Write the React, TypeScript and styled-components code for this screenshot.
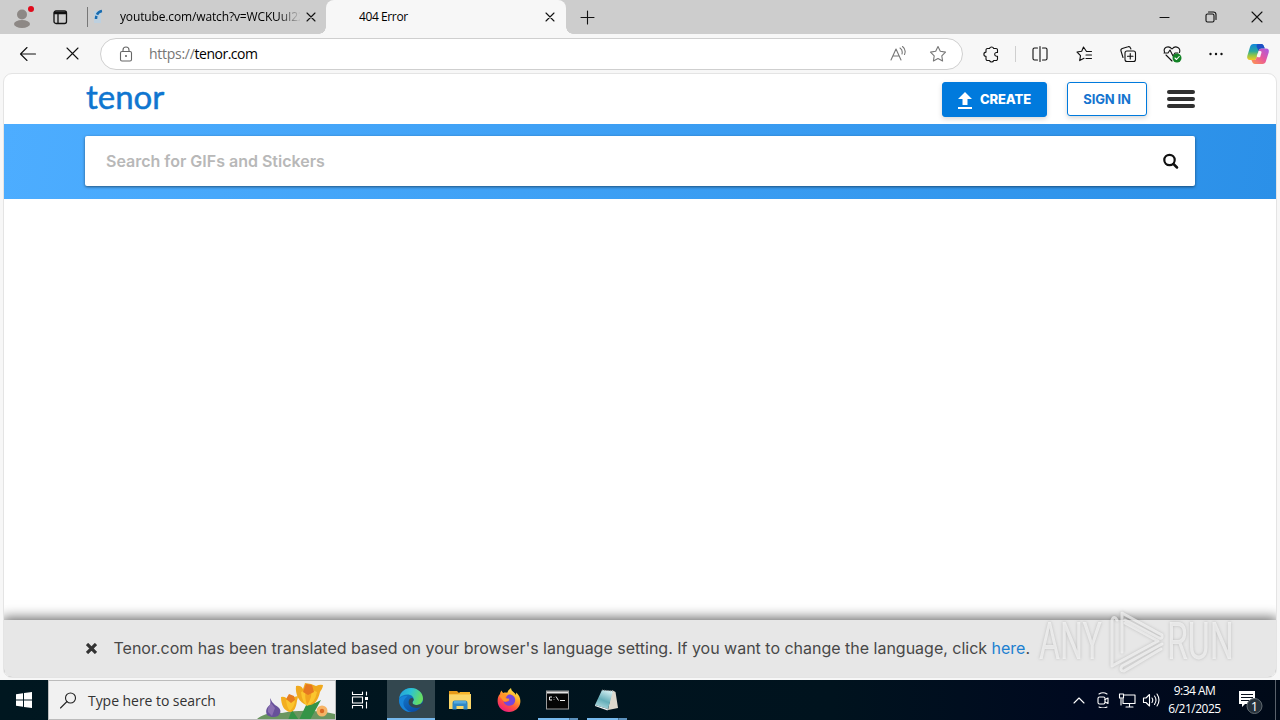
import * as React from 'react';
import styled, { createGlobalStyle } from 'styled-components';

const uiFont = `'Open Sans', 'Noto Sans', sans-serif`;
const siteFont = `Inter, 'Liberation Sans', sans-serif`;

const GlobalStyle = createGlobalStyle`
  * {
    box-sizing: border-box;
  }
  body {
    margin: 0;
    overflow: hidden;
    font-family: ${uiFont};
  }
  svg {
    display: block;
    flex-shrink: 0;
  }
`;

const Desktop = styled.div`
  position: relative;
  display: flex;
  flex-direction: column;
  width: 1280px;
  height: 720px;
  overflow: hidden;
  background: #f7f7f7;
`;

/* ---------- tab strip ---------- */

const TabStrip = styled.div`
  display: flex;
  height: 34px;
  background: #cdcdcd;
  color: #000;
  font-size: 12px;
`;

const Cell = styled.div<{ $width: number }>`
  display: flex;
  flex: none;
  align-items: center;
  justify-content: center;
  width: ${({ $width }) => $width}px;
  height: 100%;
`;

const StripDivider = styled.div`
  width: 1px;
  height: 20px;
  margin: 7px 0 0 3px;
  background: #777;
`;

const Tab = styled.div<{ $active?: boolean }>`
  position: relative;
  display: flex;
  align-items: center;
  width: ${({ $active }) => ($active ? 240 : 238)}px;
  padding-left: ${({ $active }) => ($active ? 33 : 0)}px;
  background: ${({ $active }) => ($active ? '#f7f7f7' : 'transparent')};
  border-radius: 8px 8px 0 0;

  &::before,
  &::after {
    content: '';
    display: ${({ $active }) => ($active ? 'block' : 'none')};
    position: absolute;
    bottom: 0;
    width: 7px;
    height: 7px;
  }
  &::before {
    left: -7px;
    background: radial-gradient(circle at 0 0, #cdcdcd 6.5px, #f7f7f7 7px);
  }
  &::after {
    right: -7px;
    background: radial-gradient(circle at 100% 0, #cdcdcd 6.5px, #f7f7f7 7px);
  }
`;

const TabTitle = styled.div<{ $width: number; $fade?: boolean }>`
  width: ${({ $width }) => $width}px;
  overflow: hidden;
  white-space: nowrap;
  line-height: 18px;
  letter-spacing: ${({ $fade }) => ($fade ? '-0.14px' : '-0.4px')};
  mask-image: ${({ $fade }) =>
    $fade ? 'linear-gradient(90deg, #000 158px, transparent 181px)' : 'none'};
`;

const Spacer = styled.div`
  flex: 1;
`;

/* ---------- toolbar ---------- */

const Toolbar = styled.div`
  display: flex;
  height: 39px;
  padding-left: 6px;
  background: #f7f7f7;
`;

const AddressBar = styled.div`
  display: flex;
  align-items: center;
  width: 863px;
  height: 32px;
  margin: 4px 6px 0;
  padding: 0 3px 0 17px;
  border: 1px solid #cfcfcf;
  border-radius: 16px;
  background: #fff;
  font-size: 14px;
`;

const Url = styled.div`
  flex: 1;
  margin-left: 15px;
  color: #000;
  letter-spacing: -0.5px;
  line-height: 20px;

  span {
    color: #767676;
    letter-spacing: -0.27px;
  }
`;

const ToolDivider = styled.div`
  width: 1px;
  height: 16px;
  margin: 12px 2px 0;
  background: #cfcfcf;
`;

/* ---------- web page ---------- */

const Page = styled.div`
  display: flex;
  flex: none;
  flex-direction: column;
  height: 605px;
  margin: 0 3px;
  border: 1px solid #e4e4e4;
  border-radius: 9px;
  background: #fff;
  overflow: hidden;
  font-family: ${siteFont};
`;

const SiteHeader = styled.div`
  display: flex;
  height: 50px;
  padding: 8px 81px 0;
`;

const Logo = styled.div`
  flex: 1;
  height: 34px;
  margin-left: 1px;
  color: #0f76d0;
  font-family: Lato, sans-serif;
  font-size: 33px;
  letter-spacing: 0;
  line-height: 28px;
  -webkit-text-stroke: 0.5px #0f76d0;
`;

const Button = styled.div<{ $primary?: boolean }>`
  display: flex;
  align-items: center;
  justify-content: center;
  gap: 8px;
  width: ${({ $primary }) => ($primary ? 105 : 80)}px;
  height: ${({ $primary }) => ($primary ? 35 : 34)}px;
  margin-right: 20px;
  border: 1px solid #007add;
  border-radius: 3px;
  background: ${({ $primary }) => ($primary ? '#007add' : '#fff')};
  box-shadow: 0 2px 5px rgba(0, 0, 0, 0.16);
  color: ${({ $primary }) => ($primary ? '#fff' : '#1674cf')};
  font-size: 13px;
  font-weight: ${({ $primary }) => ($primary ? 800 : 700)};
  letter-spacing: -0.15px;
  line-height: 16px;
  white-space: nowrap;
`;

const CreateLabel = styled.span`
  padding-bottom: 1px;
`;

const UploadIcon = styled.svg`
  margin-top: 2px;
`;

const MenuButton = styled.div`
  display: flex;
  flex-direction: column;
  gap: 3px;
  width: 28px;
  padding-top: 8px;
`;

const MenuLine = styled.div`
  height: 4px;
  border-radius: 2px;
  background: #303030;
`;

const SearchBand = styled.div`
  height: 75px;
  padding: 12px 81px 0;
  background: linear-gradient(100deg, #4dadff, #2b90e8);
`;

const SearchField = styled.div`
  display: flex;
  align-items: center;
  justify-content: space-between;
  height: 50px;
  padding: 0 16px 0 21px;
  border-radius: 2px;
  background: #fff;
  box-shadow: 0 1px 3px rgba(0, 0, 0, 0.5);
  color: #b8b8b8;
  font-size: 16px;
  font-weight: 600;
`;

const Notice = styled.div`
  display: flex;
  align-items: center;
  height: 57px;
  padding-left: 82px;
  background: #e7e7e7;
  box-shadow: 0 0 12px 2px rgba(0, 0, 0, 0.62);
  color: #484848;
  font-size: 16px;
`;

const NoticeText = styled.div`
  margin-left: 16.5px;
  padding-bottom: 2px;
  letter-spacing: -0.01px;
  white-space: nowrap;

  a {
    color: #2080d0;
  }
`;

/* ---------- taskbar ---------- */

const Taskbar = styled.div`
  display: flex;
  height: 40px;
  margin-top: 2px;
  background: linear-gradient(90deg, #001720, #00131e 65%, #000920 85%, #000a18);
  color: #fff;
`;

const TaskSearch = styled.div`
  display: flex;
  align-items: center;
  width: 288px;
  padding-left: 11px;
  border: 1px solid #bcbcbc;
  background: #f1f1f1;
  color: #333;
  font-size: 14px;
  overflow: hidden;
`;

const TaskSearchText = styled.div`
  flex: 1;
  margin-left: 11px;
  white-space: nowrap;
  letter-spacing: -0.05px;
`;

const TaskItem = styled.div<{ $active?: boolean; $open?: boolean }>`
  display: flex;
  align-items: center;
  justify-content: center;
  width: 48px;
  height: 40px;
  margin-right: 1px;
  background: ${({ $active }) => ($active ? '#33474f' : 'transparent')};
  box-shadow: ${({ $active }) => ($active ? 'inset 0 -2px #76b9ed' : 'none')};
  background-image: ${({ $open }) =>
    $open
      ? 'linear-gradient(90deg, #76b9ed 31px, #456f91 31px, #456f91 32px, #5c91bc 32px)'
      : 'none'};
  background-repeat: no-repeat;
  background-size: 40px 2px;
  background-position: 4px 38px;
`;

const Clock = styled.div`
  width: 61px;
  padding-top: 2px;
  font-size: 12px;
  letter-spacing: -0.5px;
  line-height: 18px;
  text-align: center;
  white-space: nowrap;
`;

const PeekEdge = styled.div`
  width: 5px;
  margin-left: 9px;
  border-left: 1px solid #59616b;
`;

const Watermark = styled.svg`
  position: absolute;
  left: 1034px;
  top: 604px;
  filter: drop-shadow(0 0 1.5px rgba(90, 90, 90, 0.5));
`;

/* ---------- icons ---------- */

type IconProps = {
  size?: number;
  color?: string;
  weight?: number;
  children: React.ReactNode;
};

const Icon = ({ size = 20, color = '#111', weight = 1.1, children }: IconProps) => (
  <svg
    width={size}
    height={size}
    viewBox={`0 0 ${size} ${size}`}
    fill="none"
    stroke={color}
    strokeWidth={weight}
    strokeLinecap="round"
    strokeLinejoin="round"
  >
    {children}
  </svg>
);

const CrossIcon = ({ size = 10 }: { size?: number }) => (
  <Icon size={size}>
    <path d={`M1 1 ${size - 1} ${size - 1}M${size - 1} 1 1 ${size - 1}`} />
  </Icon>
);

const ProfileIcon = () => (
  <svg width="24" height="26" viewBox="0 0 24 26">
    <circle cx="12" cy="10.500" r="5" fill="#8d8885" />
    <ellipse cx="12" cy="20" rx="8" ry="4" fill="#8d8885" />
    <circle cx="21" cy="5" r="3" fill="#e00b1c" />
  </svg>
);

const starPath = 'M10 2.500l2.300 4.800 5.200.8-3.700 3.700.8 5.200-4.600-2.500L5.400 17l.8-5.200-3.700-3.700 5.200-.8z';

const CopilotIcon = () => (
  <svg width="24" height="24" viewBox="0 0 24 24">
    <defs>
      <linearGradient id="cpA" x1="0" y1="0" x2="0" y2="1">
        <stop offset="0" stopColor="#1287dc" />
        <stop offset=".45" stopColor="#2aa8a0" />
        <stop offset=".7" stopColor="#8cc54a" />
        <stop offset="1" stopColor="#f5ca24" />
      </linearGradient>
      <linearGradient id="cpB" x1="1" y1="0" x2="0" y2="1">
        <stop offset="0" stopColor="#a55ae8" />
        <stop offset=".5" stopColor="#e9599a" />
        <stop offset="1" stopColor="#ff994b" />
      </linearGradient>
    </defs>
    <path
      d="M7.500 2h7.600c1.600 0 2.300 1 2.800 2.400l.8 2.200h-3c-1.800 0-2.500.9-3 2.400l-2 6.400c-.6 1.900-1.300 2.600-3 2.600H4c-2.300 0-3.300-1.700-2.700-4L4 5c.6-1.900 1.600-3 3.500-3z"
      fill="url(#cpA)"
    />
    <path d="M12 2h3.400c1.400 0 2.100.9 2.600 2.400l.8 2.200h-3.200c-1.700 0-2.600.7-3.100 2.200L10.700 5C10.300 3.300 11 2 12 2z" fill="#1d50c5" />
    <path
      d="M16.500 22H9c-1.700 0-2.400-1-2.900-2.400L5.400 18h2.200c1.800 0 2.500-.9 3-2.600l2-6.400c.5-1.600 1.300-2.400 3-2.400H20c2.400 0 3.300 1.700 2.700 3.800l-2.800 8.800c-.5 1.800-1.600 2.800-3.400 2.800z"
      fill="url(#cpB)"
    />
    <path d="M12.700 9h1.500c1.100 0 1.500.7 1.200 1.800l-1.300 4.400h-2.200c-1 0-1.300-.6-1-1.600z" fill="#f7f7f7" />
  </svg>
);

const EdgeIcon = () => (
  <svg width="26" height="26" viewBox="0 0 26 26">
    <defs>
      <linearGradient id="edTop" x1="0" y1="0" x2="1" y2=".3">
        <stop offset="0" stopColor="#259cd8" />
        <stop offset=".5" stopColor="#2bc2d5" />
        <stop offset="1" stopColor="#66dd63" />
      </linearGradient>
      <linearGradient id="edBody" x1="0" y1="0" x2=".6" y2="1">
        <stop offset="0" stopColor="#1688d5" />
        <stop offset="1" stopColor="#0b4ea6" />
      </linearGradient>
    </defs>
    <circle cx="13" cy="13" r="12" fill="url(#edBody)" />
    <path
      d="M1.300 11C2.500 4.800 7.400 1 13 1c7 0 12 5 12 10.600 0 4-3 6.400-6.400 6.400-2.600 0-4.400-.9-4.400-2 0-.8 1.500-1.500 1.500-3.500 0-2.700-2.500-5-6.200-5C6 7.500 2.800 8.800 1.300 11z"
      fill="url(#edTop)"
    />
    <path
      d="M14.500 15.800c0 1.400 2.500 2.500 5 2.300 1.800-.1 3.500-.9 4.300-1.800.5-.5 1.200.2.800.8-.5 1.100-1.300 2-1.900 2.700-.4.400-.8.500-1.300.7-4.300 1.300-9.700-.5-10.600-4-.4-1.700-.1-3.500 1.100-4.800 1.300-1.300 3.600-1 3.700.8 0 1.400-1.100 1.800-1.100 3.300z"
      fill="#33474f"
    />
    <path d="M9.500 9.500c-4 2-6 8-1.500 12.500 2 2 4 2.800 5.500 3C6 25.500 1 19.500 1 13c1.500-4 6-4.500 8.500-3.500z" fill="#1784d8" />
  </svg>
);

const FolderIcon = () => (
  <svg width="24" height="22" viewBox="0 0 24 22">
    <path d="M1 2h8l2 2h10v16H1z" fill="#e79b19" />
    <path d="M1 5h22v15H1z" fill="#fbd668" />
    <path d="M1 5h9l2-2h10v2.500H1z" fill="#f7b52c" />
    <path d="M4.500 14q0-2.500 2-2.500h11q2 0 2 2.500v6.500h-4V17h-7v3.500h-4z" fill="#3187c4" />
    <path d="M6 12h12v2.500H6z" fill="#55a9de" />
  </svg>
);

const FirefoxIcon = () => (
  <svg width="26" height="26" viewBox="0 0 26 26">
    <defs>
      <linearGradient id="ff" x1=".8" y1="0" x2=".25" y2="1">
        <stop offset="0" stopColor="#fff150" />
        <stop offset=".35" stopColor="#ffae29" />
        <stop offset=".65" stopColor="#ff553e" />
        <stop offset="1" stopColor="#ed1783" />
      </linearGradient>
    </defs>
    <path
      d="M5.500 3.500c.3 1 .9 1.800 1.700 2.500 1.200-.5 2.700-.6 4-.2.700-2 2-3.500 3.800-4.800.2 2 1 3 2.700 4.300 1 .8 1.800 1.700 2.300 2.700l.2-2.500c3.300 2.800 4.500 6 4.100 10C23.700 20.700 19 25 13 25S1.700 20.500 1.600 14.200c0-3.400.8-5.600 2.400-7.200.1-1.200.6-2.500 1.500-3.500z"
      fill="url(#ff)"
    />
    <path d="M13 7.500c4 0 6.200 2.500 6.200 5.600 0 3.400-2.600 5.700-5.800 5.700-3 0-5.600-2-5.800-4.800 1.600 1.200 3.500 1.200 5.200.1.600-.5.800-.9-.2-1.100-1.900-.3-2.500-1.300-2.400-2.500.2-1.300 1.200-2.500 2.800-3z" fill="#7546dc" />
    <path d="M3.500 9c2-2 5-2.500 7.500-.8-1.500.8-2 1.700-2 3l4.500.5c-.3 1.500-1.800 1.700-3 2.300-.8.800-1.800.7-2.900.3C6 12 4.500 10.500 3.500 9z" fill="#ff9629" />
  </svg>
);

const TerminalIcon = () => (
  <svg width="24" height="20" viewBox="0 0 24 20">
    <rect x=".5" y="1" width="22" height="18" fill="#050505" stroke="#9c9c9c" />
    <path d="M1 1.500h21v2H1z" fill="#e4e4e4" />
    <path d="M6 7H3.500v3H6M8 7v.5M8 9.500v.5M10 6.500l2.500 4M14 10.500h5" stroke="#eee" fill="none" />
  </svg>
);

const NotepadIcon = () => (
  <svg width="26" height="24" viewBox="1 0 26 24">
    <defs>
      <linearGradient id="np" x1=".7" y1="0" x2=".3" y2="1">
        <stop offset="0" stopColor="#d6f0f3" />
        <stop offset=".55" stopColor="#64adb8" />
        <stop offset="1" stopColor="#b4dce2" />
      </linearGradient>
    </defs>
    <path d="M19 2l3.500 2L25 20l-10 2z" fill="#dcd8cd" />
    <path d="M9 2l11 1-5 18-13-4z" fill="url(#np)" />
    <path d="M2 17l13 4-.5 1.500L2 18z" fill="#f0f4f4" />
    <path d="M9 2l11 1" stroke="#777" strokeDasharray="1 1" fill="none" />
  </svg>
);

const Crocus = () => (
  <svg width="78" height="38" viewBox="258 681 78 38">
    <path d="M258 719c6-5 15-7 25-6 15-3 35-3 53 1v5h-78z" fill="#6a9660" />
    <path d="M289 720l4-10 7 10M300 720l8-17 8 0 6-3-11 20M306 713l-5-9" fill="#349447" />
    <path d="M271 698q2 5 5 7c6 3 7 7 3 11-4 2-8 1-11-1-2-5 0-8 3-10 1-3 0-5 0-7z" fill="#67519a" />
    <path d="M272 703q-4 5-3 9l4 4 3-8z" fill="#8a70b2" />
    <path d="M282 697q4-1 6 2l3-4 4 2 4-1c0 2-1 4-1 5-1 7-3 11-7 11-6-1-9-7-9-15z" fill="#f3ae1e" />
    <path d="M287 700q1 8 4 11 5-5 5-11l-4-2z" fill="#fbc52e" />
    <path d="M287 699l3-5 5 2 1 4-4 3z" fill="#e77c20" />
    <path d="M297 686q5-1 7 3l2-6 6 1 5 2q4-2 7-1c0 3-2 5-3 7-2 9-6 14-13 13-8-2-12-11-11-19z" fill="#f0a91e" />
    <path d="M302 692q1 10 6 14 8-3 10-14l-7-3z" fill="#fbc62e" />
    <path d="M308 705q-3-9-1-15l5-3q2 10-4 18z" fill="#f2a41f" />
    <path d="M304 692l3-8 6 1 2 7-6 3z" fill="#e67821" />
    <circle cx="323" cy="711" r="5.500" fill="#f6b466" />
    <circle cx="323" cy="711" r="2.200" fill="#dc6a23" />
  </svg>
);

const BrowserTabs = () => (
  <TabStrip>
    <Cell $width={44}><ProfileIcon /></Cell>
    <Cell $width={32}>
      <Icon size={16} weight={1.3}>
        <rect x="2" y="2" width="12.500" height="12.500" rx="2" />
        <path d="M2.500 3.500h11.500M2.500 4.500h11.500M6 5v9" />
      </Icon>
    </Cell>
    <Cell $width={8} />
    <StripDivider />
    <Tab>
      <Cell $width={20}>
        <svg width="16" height="18" viewBox="0 0 16 18">
          <rect x="4" y="3" width="7" height="12" fill="#bdd0df" />
          <path d="M12 3Q5.500 4 6 13" stroke="#176bb0" strokeWidth="2.500" strokeDasharray="6.500 1.500 3" fill="none" />
        </svg>
      </Cell>
      <Cell $width={12} />
      <TabTitle $width={180} $fade>youtube.com/watch?v=WCKUuI22</TabTitle>
      <Cell $width={22}><CrossIcon /></Cell>
    </Tab>
    <Tab $active>
      <TabTitle $width={180}>404 Error</TabTitle>
      <Cell $width={22}><CrossIcon /></Cell>
    </Tab>
    <Cell $width={43}>
      <Icon size={15}><path d="M7.500 1v13M1 7.500h13" /></Icon>
    </Cell>
    <Spacer />
    <Cell $width={46}>
      <Icon size={12}><path d="M1 6.500h9" /></Icon>
    </Cell>
    <Cell $width={46}>
      <Icon size={12}>
        <rect x="1" y="3" width="8" height="8" rx="1.500" />
        <path d="M3.500 1h5a2.500 2.500 0 0 1 2.500 2.500v5" />
      </Icon>
    </Cell>
    <Cell $width={46}><CrossIcon size={12} /></Cell>
  </TabStrip>
);

const BrowserToolbar = () => (
  <Toolbar>
    <Cell $width={44}>
      <Icon><path d="M17.500 10H2.500M9 3.500 2.500 10 9 16.500" /></Icon>
    </Cell>
    <Cell $width={44}><CrossIcon size={13} /></Cell>
    <AddressBar>
      <Icon size={16} color="#666">
        <rect x="2.500" y="5.500" width="11" height="9.500" rx="1.500" />
        <path d="M5 5.500V4a3 3 0 0 1 6 0v1.500" />
        <circle cx="8" cy="10" r=".5" />
      </Icon>
      <Url><span>https://</span>tenor.com</Url>
      <Cell $width={38}>
        <Icon color="#777" size={18}>
          <path d="M2 15 7 4l5 11M4 11h6M11 3q3 2 2 6M13.500 1.500q4 3 2 8" />
        </Icon>
      </Cell>
      <Cell $width={42}>
        <Icon color="#777"><path d={starPath} /></Icon>
      </Cell>
    </AddressBar>
    <Cell $width={44}>
      <Icon size={18}>
        <path d="M5.500 3.500h2a2.200 2.200 0 0 1 4.200 0H14A1.500 1.500 0 0 1 15.500 5v2.500h-1a1.800 1.800 0 0 0 0 3.700h1V14a1.500 1.500 0 0 1-1.500 1.500h-2.300a2.200 2.200 0 0 1-4.200 0h-2A1.500 1.500 0 0 1 4 14v-2.700a2 2 0 0 1 0-4.200V5a1.500 1.500 0 0 1 1.500-1.500z" />
      </Icon>
    </Cell>
    <ToolDivider />
    <Cell $width={44}>
      <Icon size={18}>
        <path d="M6.500 3h-3A1.500 1.500 0 0 0 2 4.500v9A1.500 1.500 0 0 0 3.500 15h3M9 1.500v15M11.500 3h3A1.500 1.500 0 0 1 16 4.500v9a1.500 1.500 0 0 1-1.500 1.500h-3" />
      </Icon>
    </Cell>
    <Cell $width={44}>
      <Icon size={18}>
        <path d="M16.500 6.500h-5L8.500 2 6.700 6.300 2 7l3.500 3.600-.8 5L9 13.300M11 10h5.500M11 13.500h5.500" />
      </Icon>
    </Cell>
    <Cell $width={44}>
      <Icon size={18}>
        <rect x="6" y="6" width="10.500" height="10.500" rx="2" />
        <path d="M11.250 8.500v5.500M8.500 11.250H14M4 12.500 2 6a2 2 0 0 1 1.300-2.500L9 1.800A2 2 0 0 1 11.500 3l.4 1" />
      </Icon>
    </Cell>
    <Cell $width={44}>
      <Icon size={20}>
        <path d="M10 17 4 11M2.500 8C1 4 6 .5 10 5c4-4.500 9-.5 7.500 3.500M2 9h4l2-3 3 6 2-3h3" />
        <circle cx="15" cy="14" r="4.500" fill="#138326" stroke="none" />
        <path d="m13 14 1.500 1.500 2.700-3" stroke="#fff" />
      </Icon>
    </Cell>
    <Cell $width={44}>
      <Icon size={18}>
        <g fill="#111" stroke="none">
          <circle cx="3.500" cy="9" r="1.200" />
          <circle cx="9" cy="9" r="1.200" />
          <circle cx="14.500" cy="9" r="1.200" />
        </g>
      </Icon>
    </Cell>
    <Cell $width={40}><CopilotIcon /></Cell>
  </Toolbar>
);

const TenorPage = () => (
  <Page>
    <SiteHeader>
      <Logo>tenor</Logo>
      <Button $primary>
        <UploadIcon width="14" height="17" viewBox="0 0 14 17" fill="#fff">
          <path d="M7 0l7 7H9.500v6h-5V7H0zM0 15h14v2H0z" />
        </UploadIcon>
        <CreateLabel>CREATE</CreateLabel>
      </Button>
      <Button>SIGN IN</Button>
      <MenuButton>
        <MenuLine />
        <MenuLine />
        <MenuLine />
      </MenuButton>
    </SiteHeader>
    <SearchBand>
      <SearchField>
        Search for GIFs and Stickers
        <svg width="16" height="16" viewBox="0 0 16 16" fill="none" stroke="#111">
          <circle cx="6.500" cy="7" r="5.200" strokeWidth="2.200" />
          <path d="m10.500 11 3.500 3.500" strokeWidth="2.500" strokeLinecap="round" />
        </svg>
      </SearchField>
    </SearchBand>
    <Spacer />
    <Notice>
      <svg width="11" height="11" viewBox="0 0 11 11" stroke="#333" strokeWidth="3.200">
        <path d="m1 1 9 9M10 1l-9 9" />
      </svg>
      <NoticeText>
        Tenor.com has been translated based on your browser's language setting. If you want to change the language, click <a>here</a>.
      </NoticeText>
    </Notice>
  </Page>
);

const SystemTaskbar = () => (
  <Taskbar>
    <Cell $width={48}>
      <svg width="16" height="16" viewBox="0 0 16 16" fill="#fff">
        <path d="M0 2.300 7 1.200v6.300H0zM8 1l8-1v7.500H8zM0 8.500h7v6.300l-7-1zM8 8.500h8V16l-8-1z" />
      </svg>
    </Cell>
    <TaskSearch>
      <Icon size={17} color="#222">
        <circle cx="10.500" cy="6" r="5" />
        <path d="m7 9.500-6.500 6.500" />
      </Icon>
      <TaskSearchText>Type here to search</TaskSearchText>
      <Crocus />
    </TaskSearch>
    <Cell $width={48}>
      <Icon size={18} color="#fff">
        <path d="M1.500 1v2.500h10V1M1.500 17v-2.500h10V17M1.500 6h10v6h-10zM15.500 1v3M15.500 11v6" />
        <path d="M14 6h3v3h-3z" fill="#fff" stroke="none" />
      </Icon>
    </Cell>
    <Cell $width={3} />
    <TaskItem $active><EdgeIcon /></TaskItem>
    <TaskItem><FolderIcon /></TaskItem>
    <TaskItem><FirefoxIcon /></TaskItem>
    <TaskItem $open><TerminalIcon /></TaskItem>
    <TaskItem $open><NotepadIcon /></TaskItem>
    <Spacer />
    <Cell $width={24}>
      <Icon size={14} color="#fff"><path d="m2 10 5-5 5 5" /></Icon>
    </Cell>
    <Cell $width={24}>
      <Icon size={16} color="#fff">
        <rect x="3" y="5" width="7" height="7" rx="1.500" />
        <path d="m10 7.500 3-1.500v5.500L10 10M4 2q4-2.500 8 0M4 15q4 2 8 0" />
      </Icon>
    </Cell>
    <Cell $width={23}>
      <Icon size={18} color="#fff">
        <path d="M6 4h11v8.500H5V8M8 16h7M11.500 12.500V16M3 8v6M1.500 3h4v4h-4z" />
      </Icon>
    </Cell>
    <Cell $width={25}>
      <Icon size={18} color="#fff">
        <path d="M1.500 7v4.500H4l3.500 3.500V3.500L4 7zM10 7q1.500 2 0 4.500M12.500 5q3 4 0 8.500M15 3q4 6 0 12" />
      </Icon>
    </Cell>
    <Cell $width={1} />
    <Clock>9:34 AM<br />6/21/2025</Clock>
    <Cell $width={9} />
    <Cell $width={32}>
      <svg width="28" height="28" viewBox="0 0 28 28">
        <path d="M3 5h16v13H9l-3 3v-3H3z" fill="#fff" />
        <path d="M5 8.500h12M5 11.500h12M5 14.500h8" stroke="#07101e" />
        <circle cx="18.500" cy="20" r="7.500" fill="#26313b" stroke="#626b72" />
        <text x="18.500" y="24.500" textAnchor="middle" fill="#fff" fontSize="13" fontFamily="Open Sans, sans-serif">1</text>
      </svg>
    </Cell>
    <PeekEdge />
  </Taskbar>
);

const App = () => (
  <Desktop>
    <GlobalStyle />
    <BrowserTabs />
    <BrowserToolbar />
    <TenorPage />
    <SystemTaskbar />
    <Watermark width="214" height="72" viewBox="0 0 214 72" fill="none">
      <g fill="#fff" fillOpacity=".6" fontFamily="Roboto, sans-serif" fontSize="52" fontWeight="400">
        <text x="5" y="55" textLength="63" lengthAdjust="spacingAndGlyphs">ANY</text>
        <text x="133" y="55" textLength="67" lengthAdjust="spacingAndGlyphs">RUN</text>
      </g>
      <g stroke="#fff" strokeOpacity=".6" strokeWidth="3" strokeLinejoin="round" strokeLinecap="round">
        <path d="M88 48V9l40 22q1 4-3 3L91 16" />
        <path d="M83 16q-3-5-5 0v46L124 37 91 19M128 40 88 62q-3 5 2 5l37-22" />
      </g>
    </Watermark>
  </Desktop>
);

export default App;
